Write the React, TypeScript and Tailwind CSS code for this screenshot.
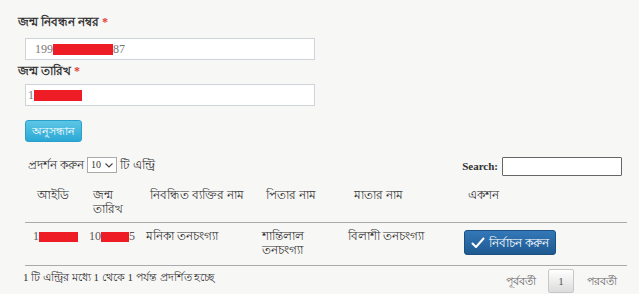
import { useState } from "react";

const Redacted = ({ w, h = 10 }: { w: number; h?: number }) => (
  <span className="inline-block bg-[#ee1c25] align-middle" style={{ width: w, height: h }} />
);

const CheckIcon = () => (
  <svg width="14" height="12" viewBox="0 0 14 12" className="inline-block">
    <path d="M1.5 6.5 L5 10 L12.5 1.5" fill="none" stroke="white" strokeWidth="2" strokeLinecap="round" strokeLinejoin="round" />
  </svg>
);

const App = () => {
  const [pageSize, setPageSize] = useState("10");

  return (
    <div className="w-[639px] h-[294px] bg-[#f7f7f6] overflow-hidden font-['Liberation_Serif',serif] text-[#333] text-[12px]">
      <div className="pt-[14px] pl-[18px] pr-[12px]">
        <label className="block font-bold leading-[16px]">
          জন্ম নিবন্ধন নম্বর <span className="text-[#e0403a]">*</span>
        </label>
        <div className="ml-[7px] mt-[8px] w-[290px] h-[22px] bg-white border border-[#cfd4da] flex items-center pl-[9px] text-[#777] text-[12px]">
          199<Redacted w={60} h={11} />87
        </div>

        <label className="block font-bold leading-[16px] mt-[3px]">
          জন্ম তারিখ <span className="text-[#e0403a]">*</span>
        </label>
        <div className="ml-[7px] mt-[5px] w-[290px] h-[22px] bg-white border border-[#cfd4da] flex items-center pl-[2px] text-[#777] text-[12px]">
          1<Redacted w={48} h={11} />
        </div>

        <button className="ml-[7px] mt-[14px] w-[57px] h-[22px] rounded-[3px] bg-gradient-to-b from-[#5bc6e6] to-[#2aa9d6] border border-[#2a9fc9] text-white text-[11px]">
          অনুসন্ধান
        </button>
      </div>

      <div className="ml-[25px] w-[602px] mt-[14px] flex items-end justify-between">
        <div className="flex items-center gap-[3px] pl-[3px] pb-[2px]">
          <span>প্রদর্শন করুন</span>
          <span className="relative">
            <select
              value={pageSize}
              onChange={(e) => setPageSize(e.target.value)}
              className="w-[30px] h-[16px] bg-white border border-[#aaa] text-[10px] leading-none pl-[3px] appearance-none block"
            >
              <option>10</option>
            </select>
            <svg width="8" height="5" viewBox="0 0 8 5" className="absolute right-[4px] top-[6px] pointer-events-none">
              <path d="M0.5 0.5 L4 4 L7.5 0.5" fill="none" stroke="#444" strokeWidth="1.1" />
            </svg>
          </span>
          <span>টি এন্ট্রি</span>
        </div>
        <div className="flex items-center gap-[4px] mr-[5px]">
          <span className="font-bold text-[11px]">Search:</span>
          <input className="w-[120px] h-[19px] bg-white border border-[#666] rounded-[1px]" />
        </div>
      </div>

      <table className="ml-[25px] mt-[8px] w-[602px] table-fixed border-collapse">
        <colgroup>
          <col className="w-[56px]" />
          <col className="w-[57px]" />
          <col className="w-[116px]" />
          <col className="w-[88px]" />
          <col className="w-[114px]" />
          <col />
        </colgroup>
        <thead>
          <tr className="border-b border-[#aaa] align-top text-left">
            <th className="font-normal pl-[12px] pt-[4px] pb-[6px] leading-[14px]">আইডি</th>
            <th className="font-normal pl-[12px] pt-[4px] pb-[6px] leading-[14px]">জন্ম তারিখ</th>
            <th className="font-normal pl-[12px] pt-[4px] pb-[6px] leading-[14px]">নিবন্ধিত ব্যক্তির নাম</th>
            <th className="font-normal pl-[12px] pt-[4px] pb-[6px] leading-[14px]">পিতার নাম</th>
            <th className="font-normal pl-[12px] pt-[4px] pb-[6px] leading-[14px]">মাতার নাম</th>
            <th className="font-normal pl-[12px] pt-[4px] pb-[6px] leading-[14px]">একশন</th>
          </tr>
        </thead>
        <tbody>
          <tr className="border-b border-[#aaa] align-top">
            <td className="pl-[8px] pt-[6px] pb-[8px] leading-[14px] text-[#555] whitespace-nowrap">
              1<Redacted w={39} />
            </td>
            <td className="pl-[8px] pt-[6px] pb-[8px] leading-[14px] text-[#555] whitespace-nowrap overflow-visible">
              10<Redacted w={28} />5
            </td>
            <td className="pl-[8px] pt-[6px] pb-[8px] leading-[14px]">মনিকা তনচংগ্যা</td>
            <td className="pl-[8px] pt-[6px] pb-[8px] leading-[14px]">শান্তিলাল তনচংগ্যা</td>
            <td className="pl-[6px] pt-[6px] pb-[8px] leading-[14px]">বিলাশী তনচংগ্যা</td>
            <td className="pl-[8px] pt-[7px] pb-[7px]">
              <button className="w-[92px] h-[25px] rounded-[3px] bg-gradient-to-b from-[#3378b8] to-[#1f5a91] border border-[#1d4f80] text-white text-[12px] flex items-center justify-center gap-[4px]">
                <CheckIcon />
                নির্বাচন করুন
              </button>
            </td>
          </tr>
        </tbody>
      </table>

      <div className="ml-[25px] w-[602px] flex items-start justify-between">
        <span className="text-[11px] -ml-[2px] pt-[3px]">1 টি এন্ট্রির মধ্যে 1 থেকে 1 পর্যন্ত প্রদর্শিত হচ্ছে</span>
        <div className="flex items-center mt-[3px]">
          <span className="text-[#666] text-[11px] mr-[12px]">পূর্ববর্তী</span>
          <span className="w-[26px] h-[24px] border border-[#c8c8c8] rounded-[2px] bg-gradient-to-b from-white to-[#dcdcdc] flex items-center justify-center text-[11px] text-[#555]">1</span>
          <span className="text-[#666] text-[11px] ml-[13px] mr-[10px]">পরবর্তী</span>
        </div>
      </div>
    </div>
  );
};

export default App;
